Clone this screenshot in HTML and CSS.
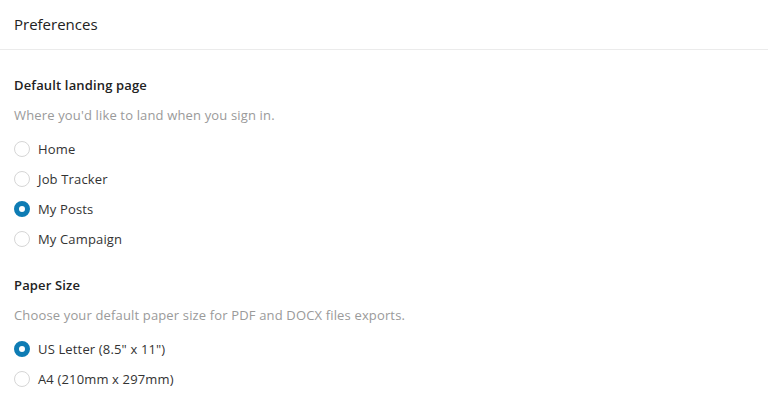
FILE: index.html
```html
<!DOCTYPE html>
<html>
<head>
<meta charset="utf-8">
<link rel="stylesheet" href="styles.css">
</head>
<body>
<div class="page">
  <header class="header"><h1 class="title">Preferences</h1></header>
  <section class="section">
    <h2 class="section-title">Default landing page</h2>
    <p class="desc">Where you'd like to land when you sign in.</p>
    <div class="options">
      <label class="option"><span class="radio"></span><span class="label">Home</span></label>
      <label class="option"><span class="radio"></span><span class="label">Job Tracker</span></label>
      <label class="option"><span class="radio checked"></span><span class="label">My Posts</span></label>
      <label class="option"><span class="radio"></span><span class="label">My Campaign</span></label>
    </div>
  </section>
  <section class="section">
    <h2 class="section-title">Paper Size</h2>
    <p class="desc">Choose your default paper size for PDF and DOCX files exports.</p>
    <div class="options">
      <label class="option"><span class="radio checked"></span><span class="label">US Letter (8.5" x 11")</span></label>
      <label class="option"><span class="radio"></span><span class="label">A4 (210mm x 297mm)</span></label>
    </div>
  </section>
</div>
</body>
</html>
```
FILE: styles.css
```css
html, body { margin: 0; padding: 0; background: #fff; }
body { font-family: "Open Sans", "Noto Sans", sans-serif; color: #222; }
.page { width: 768px; }
.header { height: 50px; border-bottom: 1px solid #ebebeb; display: flex; align-items: center; padding: 0 14px 1px; box-sizing: border-box; }
.title { margin: 0; font-size: 15px; font-weight: 500; color: #222; }
.section { padding: 25px 14px 0; }
.section + .section { padding-top: 26px; }
.section-title { margin: 0; font-size: 13px; font-weight: 600; line-height: 20px; color: #222; letter-spacing: 0.15px; }
.desc { margin: 10px 0 0; font-size: 13px; line-height: 20px; color: #9a9a9a; letter-spacing: 0.15px; }
.options { display: flex; flex-direction: column; gap: 10px; margin-top: 14px; }
.option { display: flex; align-items: center; gap: 8px; height: 20px; font-size: 13px; color: #333; letter-spacing: 0.15px; }
.radio { width: 16px; height: 16px; box-sizing: border-box; border: 1px solid #d6d6d6; border-radius: 50%; background: #fff; flex: none; }
.radio.checked { border: 5px solid #0e7cb4; background: #fff; }
.label { line-height: 20px; }
```
